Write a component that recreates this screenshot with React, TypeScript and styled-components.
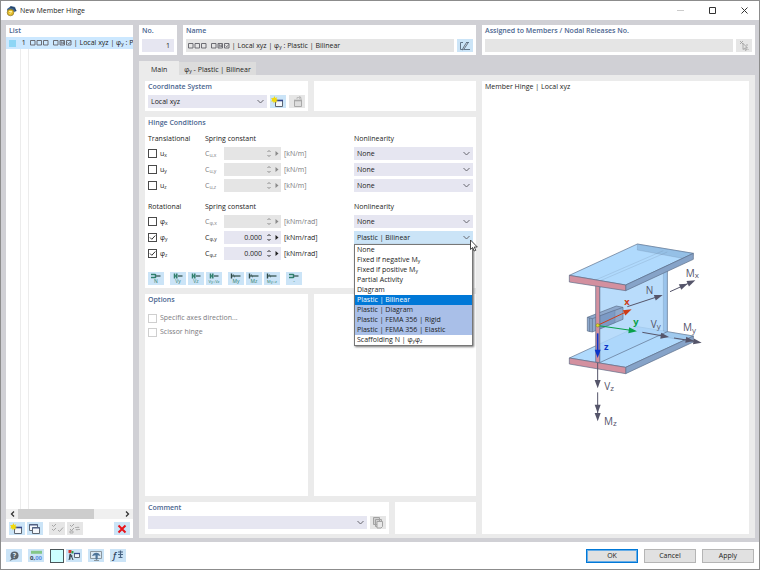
import React from "react";
import styled, { createGlobalStyle, css } from "styled-components";

const color = {
  ink: "#1c1c22",
  heading: "#4a658f",
  muted: "#7b7b80",
  frame: "#d0d0d5",
  page: "#ebebeb",
  field: "#e6e6f1",
  disabled: "#e5e5e5",
  accent: "#cbe4f7",
  green: "#2f7f6c",
};

const GlobalStyle = createGlobalStyle`
  * { box-sizing: border-box; }
  body { margin: 0; }
  body, button, input, select {
    font-family: "Open Sans", "Noto Sans", sans-serif;
    font-size: 7px;
    line-height: 10px;
    color: ${color.ink};
  }
  button, input, select { margin: 0; padding: 0; border: 0; border-radius: 0; }
  sub { font-size: 5px; line-height: 0; vertical-align: -1px; }
`;

/* ---------- window frame ---------- */

const Window = styled.div`
  display: flex;
  flex-direction: column;
  min-height: 100vh;
  background: #fff;
  border: 1px solid #8c8c8c;
  font-weight: 500;
`;

const TitleBar = styled.header`
  display: flex;
  align-items: center;
  gap: 3px;
  height: 19px;
  padding-left: 5px;
`;

const Title = styled.h1`
  flex: 1;
  margin: 0;
  font-size: 7px;
  font-weight: 500;
`;

const CaptionButton = styled.button`
  display: grid;
  place-items: center;
  width: 29px;
  height: 18px;
  background: none;
`;

const Body = styled.main`
  flex: 1;
  display: grid;
  grid-template-columns: 127px 1fr;
  gap: 6px;
  padding: 5px 4px 4px 5px;
  background: ${color.frame};
`;

const Footer = styled.footer`
  display: flex;
  align-items: center;
  gap: 6px;
  height: 27px;
  padding: 0 5px;
`;

const Panel = styled.section`
  display: flex;
  flex-direction: column;
  min-width: 0;
  background: #fff;
  padding: 1px 3px 3px;
`;

const Heading = styled.h2`
  margin: 0;
  height: 11px;
  font-size: 7px;
  line-height: 10px;
  font-weight: 600;
  color: ${color.heading};
  white-space: nowrap;
`;

const IconButton = styled.button<{ $off?: boolean }>`
  display: grid;
  place-items: center;
  flex: none;
  width: 16px;
  height: 13px;
  background: ${(p) => (p.$off ? "#e6e6e6" : color.accent)};
`;

const Line = styled.div`
  display: flex;
  align-items: center;
  gap: 3px;
  margin-top: 2px;
`;

/* ---------- list ---------- */

const ListPanel = styled(Panel)`
  padding: 1px 0 3px;
`;

const ListHeading = styled(Heading)`
  padding-left: 3px;
`;

const ListBody = styled.ul`
  flex: 1;
  margin: 0;
  padding: 0;
  list-style: none;
  background:
    linear-gradient(#ececec, #ececec) 14px 0 / 1px 100% no-repeat,
    linear-gradient(#ececec, #ececec) 22px 0 / 1px 100% no-repeat;
`;

const ListRow = styled.li`
  display: grid;
  grid-template-columns: 14px 8px 1fr;
  align-items: center;
  height: 12px;
  background: #cce8ff;
  white-space: nowrap;
  overflow: hidden;
`;

const Swatch = styled.span`
  width: 7px;
  height: 7px;
  margin-left: 3px;
  background: #8ed6f5;
`;

const RowText = styled.span`
  padding-left: 1px;
`;

const ScrollBar = styled.div`
  display: grid;
  grid-template-columns: 12px 76px 1fr 11px;
  height: 10px;
  background: #f0f0f0;
`;

const ScrollThumb = styled.div`
  background: #cdcdcd;
`;

const ScrollButton = styled.button`
  display: grid;
  place-items: center;
  background: none;
`;

const ListTools = styled.div`
  display: flex;
  gap: 2px;
  padding: 3px 3px 0;
`;

const Spacer = styled.span<{ $w?: number }>`
  ${(p) => (p.$w ? css`width: ${p.$w}px;` : css`flex: 1;`)}
`;

/* ---------- editor ---------- */

const Editor = styled.div`
  display: flex;
  flex-direction: column;
  min-width: 0;
`;

const TopRow = styled.div`
  display: grid;
  grid-template-columns: 38px 293px 1fr;
  gap: 6px;
`;

const Field = styled.input`
  flex: 1;
  min-width: 0;
  width: 100%;
  height: 13px;
  padding: 0 4px;
  background: ${color.field};
  text-align: right;
  &:disabled { background: ${color.disabled}; }
`;

const ReadOnly = styled.output`
  flex: 1;
  height: 13px;
  padding: 2px 1px 0;
  background: ${color.disabled};
  white-space: nowrap;
`;

const Tabs = styled.div`
  display: flex;
  align-items: flex-end;
  height: 20px;
  padding-top: 6px;
`;

const Tab = styled.button<{ $active?: boolean }>`
  height: ${(p) => (p.$active ? 14 : 13)}px;
  padding: ${(p) => (p.$active ? "3px 12px 0" : "2px 5px 0")};
  background: ${(p) => (p.$active ? color.page : "#dcdcdc")};
  font-weight: 500;
`;

const Page = styled.div`
  flex: 1;
  display: grid;
  grid-template-columns: 331px 1fr;
  gap: 6px;
  padding: 6px 6px 4px;
  background: ${color.page};
`;

const Form = styled.div`
  display: grid;
  grid-template-rows: 30px auto 1fr 32px;
  gap: 6px;
`;

const Split = styled.div<{ $cols: string }>`
  display: grid;
  grid-template-columns: ${(p) => p.$cols};
  gap: 6px;
`;

const ComboBox = styled.div`
  position: relative;
  flex: 1;
  min-width: 0;
`;

const NativeSelect = styled.select<{ $open?: boolean }>`
  display: block;
  appearance: none;
  width: 100%;
  height: 13px;
  padding: 0 12px 0 3px;
  background: ${(p) => (p.$open ? color.accent : color.field)};
  font-weight: 500;
`;

const Chevron = styled.svg`
  position: absolute;
  right: 3px;
  top: 4px;
  pointer-events: none;
`;

const ListBox = styled.ul`
  position: absolute;
  z-index: 2;
  top: 13px;
  left: 0;
  right: 0;
  margin: 0;
  padding: 0;
  list-style: none;
  background: #fff;
  border: 1px solid #777;
  box-shadow: 1px 1px 2px #777;
`;

const Choice = styled.li<{ $tone?: "selected" | "group" }>`
  height: 10px;
  padding-left: 2px;
  white-space: nowrap;
  background: ${(p) => (p.$tone === "selected" ? "#0078d7" : p.$tone === "group" ? "#a9bfe8" : "#fff")};
  color: ${(p) => (p.$tone === "selected" ? "#fff" : color.ink)};
`;

const Pointer = styled.svg`
  position: absolute;
  z-index: 3;
  top: 8px;
  right: -5px;
`;

const Conditions = styled(Panel)`
  padding-bottom: 3px;
`;

const Group = styled.div`
  display: grid;
  gap: 3px;
  padding-top: 5px;
  margin-bottom: 5px;
`;

const gridColumns = css`
  display: grid;
  grid-template-columns: 12px 45px 19px 60px 70px 1fr;
  align-items: center;
`;

const GroupHead = styled.div`
  ${gridColumns}
  height: 10px;
  white-space: nowrap;
`;

const HeadCell = styled.span<{ $from: number }>`
  grid-column: ${(p) => p.$from} / span 2;
`;

const Row = styled.div`
  ${gridColumns}
  height: 13px;
  white-space: nowrap;
`;

const Check = styled.input<{ $pale?: boolean }>`
  appearance: none;
  flex: none;
  width: 9px;
  height: 9px;
  border: 1px solid ${(p) => (p.$pale ? "#cfcfcf" : "#4a4a4a")};
  background: #fff;
  &:checked {
    background: #fff url("data:image/svg+xml,%3Csvg xmlns='http://www.w3.org/2000/svg' viewBox='0 0 7 7'%3E%3Cpath d='M1 3.5 2.8 5.3 6.3 1.5' fill='none' stroke='%23333'/%3E%3C/svg%3E");
  }
`;

const Caption = styled.label<{ $muted?: boolean }>`
  color: ${(p) => (p.$muted ? color.muted : color.ink)};
`;

const SpinBox = styled.div<{ $off?: boolean }>`
  display: grid;
  grid-template-columns: 1fr 8px 8px;
  width: 57px;
  height: 13px;
  background: ${(p) => (p.$off ? color.disabled : color.field)};
`;

const SpinInput = styled(Field)`
  background: none;
  padding: 0 3px 0 0;
  font-weight: 500;
`;

const SpinSteps = styled.div`
  display: grid;
  grid-template-rows: 1fr 1fr;
  padding: 2px 0;
`;

const StepButton = styled.button`
  display: grid;
  place-items: center;
  background: none;
`;

const Toolbar = styled.div`
  display: flex;
  gap: 6px;
  padding-top: 7px;
`;

const ToolGroup = styled.div`
  display: flex;
  gap: 2px;
`;

const OptionLine = styled.label`
  display: flex;
  align-items: center;
  gap: 3px;
  height: 14px;
  color: ${color.muted};
`;

const OptionList = styled.div`
  padding-top: 5px;
`;

const Preview = styled(Panel)`
  padding: 1px 3px 0;
`;

const PreviewTitle = styled.p`
  margin: 0;
  height: 11px;
`;

const Canvas = styled.div`
  flex: 1;
  display: grid;
  place-items: center;
`;

const DialogButton = styled.button<{ $primary?: boolean }>`
  width: 52px;
  height: 14px;
  background: #e1e1e1;
  border: ${(p) => (p.$primary ? "1px solid #0078d7" : "1px solid #b5b5b5")};
  box-shadow: ${(p) => (p.$primary ? "inset 0 0 0 1px #68ade6" : "none")};
  line-height: 10px;
  font-weight: 500;
`;

const ColorButton = styled.button`
  width: 14px;
  height: 14px;
  background: #ccffff;
  border: 1px solid #4a5558;
`;

const CodeBoxes = styled.svg`
  vertical-align: -1px;
`;

/* ---------- drawings ---------- */

const HingeCode = () => (
  <CodeBoxes width="43" height="7" viewBox="0 0 43 7" fill="none" stroke="#606066" aria-hidden="true">
    <path d="M1.500 1.500h4.500v4.500h-4.500zM8 1.500h4.500v4.500h-4.500zM14.500 1.500h4.500v4.500h-4.500zM24.500 1.500h4.500v4.500h-4.500zM31 1.500h4.500v4.500h-4.500zM37.500 1.500h4.500v4.500h-4.500z" strokeWidth=".9" />
    <path d="M32.200 5.300V2.500L34.400 5V2.300M38.600 3.600l1.200 1.200 2-2.400" strokeWidth=".8" />
  </CodeBoxes>
);

const AppIcon = () => (
  <svg width="11" height="12" viewBox="0 0 11 12" aria-hidden="true">
    <path d="M1 4 5 1l4 1 1.500 4-2 1L6 5 1.500 6Z" fill="#3f6590" />
    <path d="m4 2 4 1 2 3" stroke="#1f3d60" fill="none" />
    <circle cx="4.500" cy="7.500" r="3.300" fill="#e3bb2a" stroke="#78651c" strokeWidth=".6" />
    <path d="M3 6.500h3M3.500 8.500l2-1" stroke="#fff2a0" />
  </svg>
);

const NewIcon = ({ off }: { off?: boolean }) => (
  <svg width="14" height="12" viewBox="0 0 14 12" aria-hidden="true">
    <path d="M4.500 4.500h7v6h-7z" fill={off ? "#ddd" : "#f4f7fb"} stroke={off ? "#a9a9a9" : "#5d6672"} />
    <path d="M4 4.500h8" stroke={off ? "#a9a9a9" : "#34478c"} strokeWidth="1.600" />
    {off ? (
      <path d="M7 3V1.500h4V4M9 0l2 1.500L9 3" fill="none" stroke="#b4b4b4" strokeWidth=".8" />
    ) : (
      <path d="m3.500 0 .8 2 2-.8-1 2 2 .7-2 .8.6 2-2.100-1-1 1.700-.5-2L.2 5.500l1-1.800L0 2.300l2.500-.2Z" fill="#f2d90c" />
    )}
  </svg>
);

const CopyWindowsIcon = () => (
  <svg width="14" height="12" viewBox="0 0 14 12" fill="#f4f7fb" stroke="#5d6672" aria-hidden="true">
    <path d="M1.500 1.500h8v6h-8z" />
    <path d="M4.500 4.500h7v6h-7z" />
    <path d="M1 2h9M4 5h8" stroke="#465a8c" />
  </svg>
);

const ChecksIcon = ({ swap }: { swap?: boolean }) => (
  <svg width="14" height="12" viewBox="0 0 14 12" fill="none" stroke="#a5a5a5" aria-hidden="true">
    <path d="m2 2 1.500 1.500L6 1M2 6l1.500 1.500L6 5" />
    {swap ? <path d="M7 4.500h4l-1-1M12 6.500H8l1 1M2 8h3v2H2z" strokeWidth=".8" /> : <path d="M8 7l1.500 1.500L13 4.500" />}
  </svg>
);

const DeleteIcon = () => (
  <svg width="10" height="10" viewBox="0 0 10 10" aria-hidden="true">
    <path d="m1.500 1.500 7 7M8.500 1.500l-7 7" stroke="#e8141c" strokeWidth="2" />
  </svg>
);

const EditIcon = () => (
  <svg width="14" height="12" viewBox="0 0 14 12" fill="none" stroke="#56687a" aria-hidden="true">
    <path d="M5 2.500H2.500v7h2M6 9.500h6M8 2.500h3" strokeWidth=".9" />
    <path d="m4.800 8.500 3.700-6 1.300.8L6 9l-1.600.9Z" fill="#dce6ee" strokeWidth=".9" />
  </svg>
);

const PickIcon = () => (
  <svg width="12" height="12" viewBox="0 0 12 12" fill="none" stroke="#999" strokeWidth=".8" aria-hidden="true">
    <path d="m2 1 3 3M5 1 2 4M5 3.500v6l1.500-1.300 1 2.300 1-.5-1-2.200h2Z" />
    <path d="M9 4v2M10 9v1" />
  </svg>
);

const PagesIcon = () => (
  <svg width="14" height="12" viewBox="0 0 14 12" fill="#d0d0d0" stroke="#a2a2a2" aria-hidden="true">
    <path d="M2.500.5h6v7h-6zM4.500 2.500h6v7h-6z" />
    <path d="M6 4.500h5.500v5l-1.500 1.500H6z" fill="#e8e8e8" />
  </svg>
);

const HingeToolIcon = ({ kind, text }: { kind: "fork" | "bars" | "moment"; text: string }) => (
  <svg width="16" height="13" viewBox="0 0 16 13" aria-hidden="true">
    <g fill="none" stroke={color.green}>
      {kind === "fork" && <path d="M3 2.500h4.500M3 5.500h4.500M7.500 2v4" strokeWidth="1.400" />}
      {kind === "bars" && <path d="M4.500 1.500v5M6.800 1.500v5M4.500 4h3" strokeWidth="1.500" />}
      {kind === "moment" && <path d="M3.500 1.500v5" stroke="#2f4a48" strokeWidth="1.400" />}
      <path d={kind === "moment" ? "M4 4h8.500M5 2.800 7 5" : "M8 4h4.500"} stroke="#4d6a6a" strokeWidth="1.500" />
    </g>
    <text x="8" y="11" textAnchor="middle" fontSize={text.length > 3 ? 4 : 5} fill={color.green}>{text}</text>
  </svg>
);

const HelpIcon = () => (
  <svg width="14" height="12" viewBox="0 0 14 12" aria-hidden="true">
    <circle cx="7.500" cy="5.500" r="4" fill="#59636b" />
    <path d="M5 8 2.500 11 6.500 9.300" fill="#59636b" />
    <text x="7.500" y="8" textAnchor="middle" fontSize="7" fontWeight="700" fill="#dcecf8">?</text>
  </svg>
);

const DecimalsIcon = () => (
  <svg width="14" height="12" viewBox="0 0 14 12" aria-hidden="true">
    <path d="M2 .8h11v3H2z" fill="#84c687" />
    <text x="1" y="10" fontSize="6" fontWeight="700" fill="#2e3d50">0,<tspan fill="#5b8fe0">00</tspan></text>
  </svg>
);

const DisplayIcon = () => (
  <svg width="14" height="12" viewBox="0 0 14 12" aria-hidden="true">
    <path d="M1.500 1h3v3h-3z" fill="#d8342b" />
    <path d="M4.500 2h2v2.500h-2z" fill="#2f9a4d" />
    <path d="m2 11 1.500-6L6 11M2.500 7h3M3 4.500v6" fill="none" stroke="#38434d" />
    <path d="M7.500 4.500h5v4h-5z" fill="#f4f7fb" stroke="#5d6672" />
    <path d="M7 4.500h6" stroke="#34478c" strokeWidth="1.300" />
  </svg>
);

const MonitorIcon = () => (
  <svg width="14" height="12" viewBox="0 0 14 12" aria-hidden="true">
    <path d="M1.500 1.500h11v7h-11zM5 10.500h5M7.500 8.500v2" fill="#dce9f3" stroke="#8b979f" />
    <path d="M3 6c1.500-4.500 7-4.500 8.500 0L8.700 5.200v4H6.500v-4Z" fill="#4d7499" />
  </svg>
);

const FunctionIcon = () => (
  <svg width="14" height="13" viewBox="0 0 14 13" aria-hidden="true">
    <text x="2" y="10" fontSize="9" fontStyle="italic" fontWeight="600" fill="#33475e">f</text>
    <path d="M7 3h5M7 5.500h5M7.500 8.500h4M9.500 1.500v7" stroke="#4a6585" strokeWidth="1.200" />
  </svg>
);

const Head = ({ x, y, angle, fill }: { x: number; y: number; angle: number; fill: string }) => (
  <path d="M0 0-25-9V9Z" fill={fill} transform={`translate(${x} ${y}) rotate(${angle})`} />
);

const steel = "#55556a";

const BeamDrawing = () => (
  <svg width="200" height="254" viewBox="-117 -129 600 762" role="img" aria-label="Member hinge axes and internal forces">
    <g stroke="#5a6c88" strokeWidth="2" strokeLinejoin="round">
      <path d="M43 384 247 290 415 318 212 412Z" fill="#b0dafd" />
      <path d="M247 290 415 318V336L247 307Z" fill="#8fb9e0" fillOpacity=".5" strokeOpacity=".25" />
      <path d="M212 412 415 318V336L212 431Z" fill="#86a3c8" />
      <path d="M43 384 212 412V431L43 402Z" fill="#d3909f" />
      <path d="M134 172 325 84 337 84V305L134 398Z" fill="#add6fa" fillOpacity=".85" />
      <path d="M325 84H337V305L325 303Z" fill="#87b4e2" fillOpacity=".6" strokeOpacity=".3" />
      <path d="M97 262 184 228 204 232V268L112 306 97 303Z" fill="#8ea9cd" />
      <path d="M112 266 204 232M112 266V306M97 262l15 4M104 264v41" fill="none" />
      <path d="M136 257 180 240V278L136 296Z" fill="#6f91bf" fillOpacity=".6" strokeOpacity=".4" />
      <path d="M122 166H134V398L122 396Z" fill="#d3909f" />
      <path d="M43 136 247 42 415 70 212 165Z" fill="#b0dafd" />
      <path d="M247 42 415 70V76L388 86 247 60Z" fill="#769fc9" fillOpacity=".45" strokeOpacity=".25" />
      <path d="M122 150 325 62M134 153 337 66" fill="none" strokeOpacity=".25" />
      <path d="M212 165 415 70V88L212 182Z" fill="#86a3c8" />
      <path d="M43 136 212 165V182L43 156Z" fill="#d3909f" />
    </g>
    <g fill="none" strokeWidth="3">
      <path d="M217 230 305 201M345 185 405 158M262 307 325 318M357 324 425 335M128 398V455M128 487V555" stroke={steel} />
      <path d="M130 285 215 245" stroke="#cf3c16" />
      <path d="M130 287 228 301" stroke="#0aa04a" />
      <path d="M128 310V365" stroke="#0a35c8" strokeWidth="5" />
    </g>
    <Head x={230} y={238} angle={-25} fill="#cf3c16" />
    <Head x={246} y={304} angle={8} fill="#0aa04a" />
    <Head x={128} y={384} angle={90} fill="#0a35c8" />
    <Head x={323} y={195} angle={-19} fill={steel} />
    <Head x={398} y={161} angle={-24} fill={steel} />
    <Head x={421} y={151} angle={-24} fill={steel} />
    <Head x={342} y={321} angle={9} fill={steel} />
    <Head x={417} y={333} angle={9} fill={steel} />
    <Head x={440} y={338} angle={9} fill={steel} />
    <Head x={128} y={475} angle={90} fill={steel} />
    <Head x={128} y={549} angle={90} fill={steel} />
    <Head x={128} y={574} angle={90} fill={steel} />
    <circle cx="128" cy="286" r="5" fill="#e0dc2a" stroke="#8d8b28" strokeWidth="2" />
    <g fontSize="30" fill={steel}>
      <text x="272" y="191">N</text>
      <text x="392" y="140">M<tspan dy="5" fontSize="24">x</tspan></text>
      <text x="287" y="293">V<tspan dy="5" fontSize="24">y</tspan></text>
      <text x="384" y="303">M<tspan dy="5" fontSize="24">y</tspan></text>
      <text x="148" y="479">V<tspan dy="3" fontSize="24">z</tspan></text>
      <text x="147" y="585">M<tspan dy="3" fontSize="24">z</tspan></text>
      <g fontWeight="700" fontSize="28">
        <text x="208" y="226" fill="#cf3c16">x</text>
        <text x="235" y="286" fill="#0aa04a">y</text>
        <text x="147" y="360" fill="#0a35c8">z</text>
      </g>
    </g>
  </svg>
);

/* ---------- parts ---------- */

type ComboProps = { label: string; value: string; open?: boolean; children?: React.ReactNode };

const Combo = ({ label, value, open, children }: ComboProps) => (
  <ComboBox>
    <NativeSelect aria-label={label} defaultValue={value} $open={open}>
      <option>{value}</option>
    </NativeSelect>
    <Chevron width="7" height="5" viewBox="0 0 7 5" fill="none" stroke="#66666e">
      <path d="M.5 1l3 3 3-3" />
    </Chevron>
    {children}
  </ComboBox>
);

const choices: { key: string; text: React.ReactNode; tone?: "selected" | "group" }[] = [
  { key: "none", text: "None" },
  { key: "neg", text: <>Fixed if negative M<sub>y</sub></> },
  { key: "pos", text: <>Fixed if positive M<sub>y</sub></> },
  { key: "partial", text: "Partial Activity" },
  { key: "diagram", text: "Diagram" },
  { key: "bilinear", text: "Plastic | Bilinear", tone: "selected" },
  { key: "pdiagram", text: "Plastic | Diagram", tone: "group" },
  { key: "rigid", text: "Plastic | FEMA 356 | Rigid", tone: "group" },
  { key: "elastic", text: "Plastic | FEMA 356 | Elastic", tone: "group" },
  { key: "scaffold", text: <>Scaffolding N | φ<sub>y</sub>φ<sub>z</sub></> },
];

const OpenChoices = () => (
  <>
    <ListBox role="listbox" aria-label="Nonlinearity choices">
      {choices.map((c) => (
        <Choice key={c.key} role="option" aria-selected={c.tone === "selected"} $tone={c.tone}>
          {c.text}
        </Choice>
      ))}
    </ListBox>
    <Pointer width="9" height="13" viewBox="0 0 9 13" aria-hidden="true">
      <path d="M1.500 1v9.500l2.200-2 1.500 3.500 1.600-.7-1.500-3.300h3Z" fill="#fff" stroke="#333" strokeWidth=".9" />
    </Pointer>
  </>
);

type Degree = { base: string; axis: string; unit: string; on?: boolean; choice?: string; open?: boolean };

const DegreeRow = ({ base, axis, unit, on, choice = "None", open }: Degree) => {
  const id = `${base}-${axis}`;
  const ink = on ? "#222" : "#8a8a8a";
  return (
    <Row>
      <Check type="checkbox" id={id} defaultChecked={on} />
      <Caption htmlFor={id}>{base}<sub>{axis}</sub></Caption>
      <Caption htmlFor={`${id}-c`} $muted={!on}>C<sub>{base},{axis}</sub></Caption>
      <SpinBox $off={!on}>
        <SpinInput id={`${id}-c`} type="text" defaultValue={on ? "0.000" : ""} disabled={!on} />
        <SpinSteps>
          <StepButton aria-label="Increase" disabled={!on}>
            <svg width="4" height="3" viewBox="0 0 4 3"><path d="M.5 2 2 .5 3.500 2" fill="none" stroke={ink} /></svg>
          </StepButton>
          <StepButton aria-label="Decrease" disabled={!on}>
            <svg width="4" height="3" viewBox="0 0 4 3"><path d="M.5 1 2 2.500 3.500 1" fill="none" stroke={ink} /></svg>
          </StepButton>
        </SpinSteps>
        <StepButton aria-label="More" disabled={!on}>
          <svg width="4" height="5" viewBox="0 0 4 5"><path d="M.5 0 3.500 2.500.5 5Z" fill={ink} /></svg>
        </StepButton>
      </SpinBox>
      <Caption as="span" $muted={!on}>[{unit}]</Caption>
      {choice && (
        <Combo label={`Nonlinearity ${base}${axis}`} value={choice} open={open}>
          {open && <OpenChoices />}
        </Combo>
      )}
    </Row>
  );
};

const DegreeGroup = ({ title, rows }: { title: string; rows: Degree[] }) => (
  <Group>
    <GroupHead>
      <HeadCell $from={1}>{title}</HeadCell>
      <HeadCell $from={3}>Spring constant</HeadCell>
      <HeadCell $from={6}>Nonlinearity</HeadCell>
    </GroupHead>
    {rows.map((r) => <DegreeRow key={r.axis} {...r} />)}
  </Group>
);

const translational: Degree[] = ["x", "y", "z"].map((axis) => ({ base: "u", axis, unit: "kN/m" }));

const rotational: Degree[] = [
  { base: "φ", axis: "x", unit: "kNm/rad" },
  { base: "φ", axis: "y", unit: "kNm/rad", on: true, choice: "Plastic | Bilinear", open: true },
  { base: "φ", axis: "z", unit: "kNm/rad", on: true },
];

const tools: { kind: "fork" | "bars" | "moment"; text: string }[][] = [
  [{ kind: "fork", text: "N" }],
  [{ kind: "bars", text: "Vy" }, { kind: "bars", text: "Vz" }, { kind: "bars", text: "Vy+Vz" }],
  [{ kind: "moment", text: "My" }, { kind: "moment", text: "Mz" }, { kind: "moment", text: "My+z" }],
  [{ kind: "fork", text: "-" }],
];

const HingeName = () => (
  <>
    <HingeCode /> | Local xyz | φ<sub>y</sub> : Plastic | Bilinear
  </>
);

export default function App() {
  return (
    <Window>
      <GlobalStyle />
      <TitleBar>
        <AppIcon />
        <Title>New Member Hinge</Title>
        <CaptionButton aria-label="Minimize" disabled>
          <svg width="7" height="7" viewBox="0 0 7 7"><path d="M0 3.500h7" stroke="#ccc" /></svg>
        </CaptionButton>
        <CaptionButton aria-label="Maximize">
          <svg width="7" height="7" viewBox="0 0 7 7"><path d="M.5.500h6v6h-6z" fill="none" stroke="#333" /></svg>
        </CaptionButton>
        <CaptionButton aria-label="Close">
          <svg width="7" height="7" viewBox="0 0 7 7"><path d="m.5.500 6 6M6.500.500l-6 6" stroke="#333" /></svg>
        </CaptionButton>
      </TitleBar>

      <Body>
        <ListPanel>
          <ListHeading>List</ListHeading>
          <ListBody>
            <ListRow>
              <Swatch />
              <span>&nbsp;1</span>
              <RowText><HingeName /></RowText>
            </ListRow>
          </ListBody>
          <ScrollBar>
            <ScrollButton aria-label="Scroll left">
              <svg width="5" height="6" viewBox="0 0 5 6"><path d="M4 .5 1.500 3 4 5.500" fill="none" stroke="#333" strokeWidth="1.300" /></svg>
            </ScrollButton>
            <ScrollThumb />
            <span />
            <ScrollButton aria-label="Scroll right">
              <svg width="5" height="6" viewBox="0 0 5 6"><path d="M1 .5 3.500 3 1 5.500" fill="none" stroke="#333" strokeWidth="1.300" /></svg>
            </ScrollButton>
          </ScrollBar>
          <ListTools>
            <IconButton aria-label="New"><NewIcon /></IconButton>
            <IconButton aria-label="Copy"><CopyWindowsIcon /></IconButton>
            <Spacer $w={2} />
            <IconButton aria-label="Select all" $off disabled><ChecksIcon /></IconButton>
            <IconButton aria-label="Invert selection" $off disabled><ChecksIcon swap /></IconButton>
            <Spacer />
            <IconButton aria-label="Delete"><DeleteIcon /></IconButton>
          </ListTools>
        </ListPanel>

        <Editor>
          <TopRow>
            <Panel>
              <Heading as="label" htmlFor="number">No.</Heading>
              <Line><Field id="number" type="text" defaultValue="1" /></Line>
            </Panel>
            <Panel>
              <Heading>Name</Heading>
              <Line>
                <ReadOnly><HingeName /></ReadOnly>
                <IconButton aria-label="Edit name"><EditIcon /></IconButton>
              </Line>
            </Panel>
            <Panel>
              <Heading as="label" htmlFor="assigned">Assigned to Members / Nodal Releases No.</Heading>
              <Line>
                <Field id="assigned" type="text" disabled />
                <IconButton aria-label="Pick in graphic" $off disabled><PickIcon /></IconButton>
              </Line>
            </Panel>
          </TopRow>

          <Tabs role="tablist">
            <Tab role="tab" aria-selected="true" $active>Main</Tab>
            <Tab role="tab" aria-selected="false">φ<sub>y</sub> - Plastic | Bilinear</Tab>
          </Tabs>

          <Page>
            <Form>
              <Split $cols="1fr 1fr">
                <Panel>
                  <Heading>Coordinate System</Heading>
                  <Line>
                    <Combo label="Coordinate System" value="Local xyz" />
                    <IconButton aria-label="New coordinate system"><NewIcon /></IconButton>
                    <IconButton aria-label="Edit coordinate system" $off disabled><NewIcon off /></IconButton>
                  </Line>
                </Panel>
                <Panel />
              </Split>

              <Conditions>
                <Heading>Hinge Conditions</Heading>
                <DegreeGroup title="Translational" rows={translational} />
                <DegreeGroup title="Rotational" rows={rotational} />
                <Toolbar>
                  {tools.map((group, i) => (
                    <ToolGroup key={i}>
                      {group.map((t) => (
                        <IconButton key={t.text} aria-label={`Hinge ${t.text}`}><HingeToolIcon {...t} /></IconButton>
                      ))}
                    </ToolGroup>
                  ))}
                </Toolbar>
              </Conditions>

              <Split $cols="1fr 1fr">
                <Panel>
                  <Heading>Options</Heading>
                  <OptionList>
                    <OptionLine><Check type="checkbox" disabled $pale />Specific axes direction...</OptionLine>
                    <OptionLine><Check type="checkbox" disabled $pale />Scissor hinge</OptionLine>
                  </OptionList>
                </Panel>
                <Panel />
              </Split>

              <Split $cols="3fr 1fr">
                <Panel>
                  <Heading>Comment</Heading>
                  <Line>
                    <Combo label="Comment" value="" />
                    <IconButton aria-label="Copy comment" $off disabled><PagesIcon /></IconButton>
                  </Line>
                </Panel>
                <Panel />
              </Split>
            </Form>

            <Preview>
              <PreviewTitle>Member Hinge | Local xyz</PreviewTitle>
              <Canvas><BeamDrawing /></Canvas>
            </Preview>
          </Page>
        </Editor>
      </Body>

      <Footer>
        <IconButton aria-label="Help"><HelpIcon /></IconButton>
        <IconButton aria-label="Units and decimal places"><DecimalsIcon /></IconButton>
        <ToolGroup>
          <ColorButton aria-label="Color" />
          <IconButton aria-label="Display"><DisplayIcon /></IconButton>
        </ToolGroup>
        <IconButton aria-label="View"><MonitorIcon /></IconButton>
        <IconButton aria-label="Formula"><FunctionIcon /></IconButton>
        <Spacer />
        <DialogButton $primary>OK</DialogButton>
        <DialogButton>Cancel</DialogButton>
        <DialogButton>Apply</DialogButton>
      </Footer>
    </Window>
  );
}
